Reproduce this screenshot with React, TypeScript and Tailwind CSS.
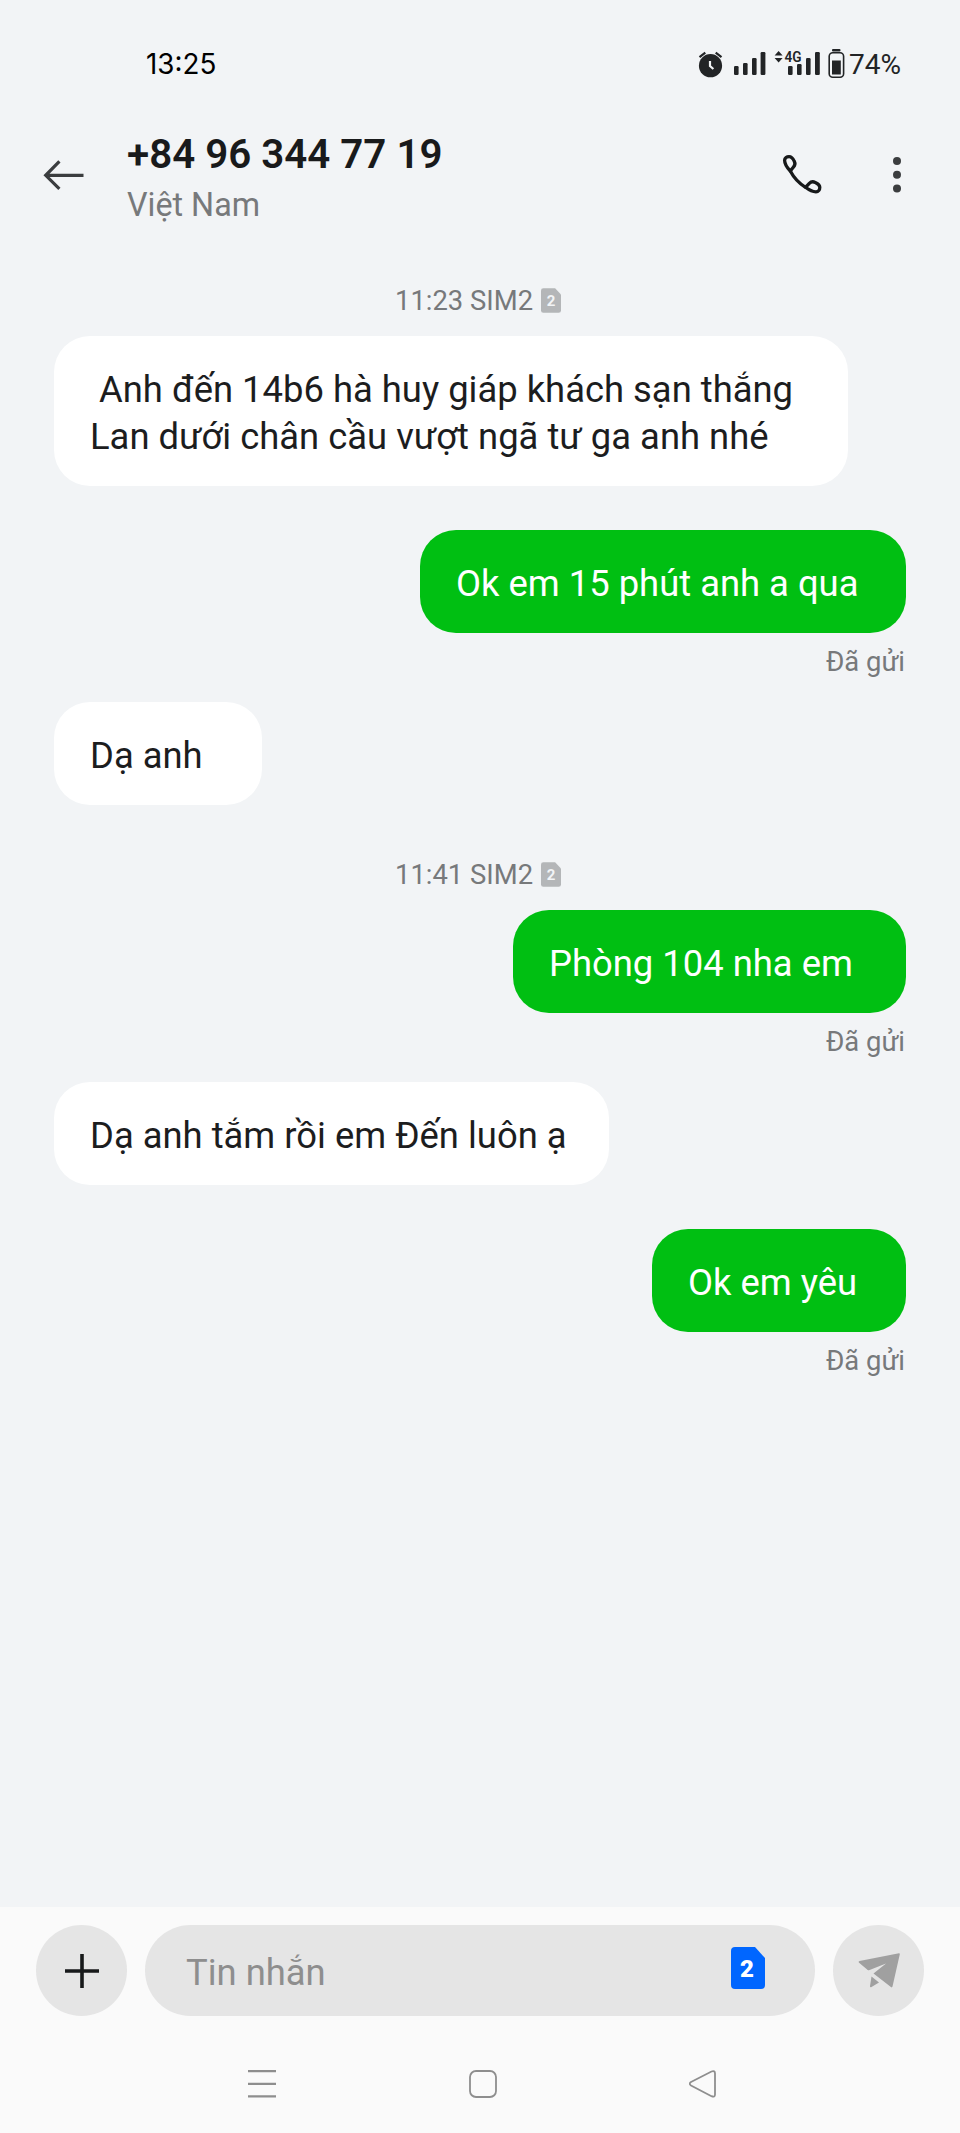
import { type ReactNode } from "react";

interface Message {
  text: string;
  sent?: boolean;
  className: string;
}

function SimBadge({ className, textClassName }: { className: string; textClassName: string }) {
  return (
    <span className={`relative flex items-center justify-center ${className}`}>
      <svg className="absolute inset-0 size-full" viewBox="0 0 34 42" fill="currentColor">
        <path d="M4 0h20l10 11v27a4 4 0 0 1-4 4H4a4 4 0 0 1-4-4V4a4 4 0 0 1 4-4z" />
      </svg>
      <span className={`relative ${textClassName}`}>2</span>
    </span>
  );
}

function StatusBar() {
  return (
    <div className="flex h-[114px] items-start justify-between pl-[146px] pr-[59px] pt-[47px]">
      <span className="text-[27.8px] leading-[35px] text-black font-[Inter,sans-serif]">13:25</span>
      <div className="flex text-[#222426]">
        <svg className="h-[36px] w-[149px]" viewBox="696 47 149 36" fill="currentColor">
          {/* Alarm */}
          <circle cx="710.5" cy="65.7" r="11.6" />
          <path d="M699.5 57.2l5.8-4.6M721.5 57.2l-5.8-4.6" stroke="currentColor" strokeWidth="2.2" />
          <path d="M710 61v5l3.4 3" fill="none" stroke="#f2f4f6" strokeWidth="2.2" />
          {/* First SIM */}
          <rect x="734" y="66" width="4.6" height="9" rx="1.2" />
          <rect x="743" y="63" width="4.6" height="12" rx="1.2" />
          <rect x="752" y="58" width="4.6" height="17" rx="1.2" />
          <rect x="760.6" y="52" width="4.8" height="23" rx="1.2" />
          {/* Second SIM with 4G */}
          <path d="M774.6 55.5l4-4.6 4 4.6zM774.6 58l4 4.6 4-4.6z" />
          <rect x="788" y="66" width="4.6" height="9" rx="1.2" />
          <rect x="797" y="64" width="4.6" height="11" rx="1.2" />
          <rect x="806" y="58" width="4.6" height="17" rx="1.2" />
          <rect x="815" y="52" width="4.8" height="23" rx="1.2" />
          <text x="784.5" y="62" fontSize="15.5" fontWeight="600" fontFamily="Roboto" textLength="17" lengthAdjust="spacingAndGlyphs">4G</text>
          {/* Battery */}
          <rect x="832" y="49" width="8.5" height="2.4" rx="1" />
          <rect x="829.2" y="52.8" width="14.4" height="24.4" rx="3.5" fill="none" stroke="currentColor" strokeWidth="1.6" />
          <rect x="832" y="60.5" width="8.8" height="14" />
        </svg>
        <span className="ml-[4px] text-[28px] leading-[36px]">74%</span>
      </div>
    </div>
  );
}

function Header() {
  return (
    <header className="flex h-[136px] items-start pl-[43px]">
      <svg className="mt-[46px] h-[30px] w-[41px] text-[#3b3d3f]" viewBox="0 0 41 30" fill="none" stroke="currentColor" strokeWidth="3.2">
        <path d="M40.5 15.3H3M16.4 1.4L2.7 15.3l13.7 13.5" />
      </svg>
      <div className="ml-[43px] mt-[17px] flex-1">
        <h1 className="whitespace-nowrap text-[40.3px] font-semibold leading-[48px] text-[#191a1b]">+84 96 344 77 19</h1>
        <p className="mt-[6px] text-[32.3px] leading-[40px] text-[#77797b]">Việt Nam</p>
      </div>
      <svg className="mt-[40px] size-[40px] text-[#17191a]" viewBox="782 154 40 40" fill="none" stroke="currentColor" strokeWidth="3.3" strokeLinejoin="round">
        <path d="M790.3 171C787 167.500 784.600 163 784.600 160.200c0-2.400 2.200-3.600 4.400-3.600 2.500 0 4 1.800 5.300 4.700 1.300 2.700.9 4-.8 5.700z" />
        <path d="M790.3 171c3.700 7 8.700 12.300 15.200 16.300" />
        <path d="M805.5 187.300c3.500 2.700 7.500 4.500 10.500 4.500 2.400 0 3.800-2 3.800-4.500 0-2.300-1.800-3.700-4.500-4.900-2.700-1.200-4.300-.8-6 .9z" />
      </svg>
      <svg className="ml-[71px] mr-[59px] mt-[43px] h-[36px] w-[8px] text-[#3b3d3f]" viewBox="0 0 8 36" fill="currentColor">
        <circle cx="4" cy="4" r="4" />
        <circle cx="4" cy="17.8" r="4" />
        <circle cx="4" cy="31.6" r="4" />
      </svg>
    </header>
  );
}

function Timestamp({ children, className }: { children: ReactNode; className: string }) {
  return (
    <div className={`flex h-[36px] items-center pl-[395px] text-[27.4px] leading-[36px] text-[#77797b] ${className}`}>
      <span className="whitespace-nowrap">{children}</span>
      <SimBadge className="mb-px ml-[8px] h-[25px] w-[20px] text-[#b4b6b8]" textClassName="mt-px text-[15px] font-bold leading-none text-[#f2f4f6]" />
    </div>
  );
}

function Bubble({ text, sent, className }: Message) {
  return (
    <div className={`flex flex-col ${sent ? "items-end" : "items-start"}`}>
      <div
        className={`whitespace-pre rounded-[36px] px-[36px] pb-[26px] pt-[30px] text-[36.4px] leading-[47px] ${
          sent ? "bg-[#00bf12] text-white" : "bg-white text-[#1c1d1e]"
        } ${className}`}
      >
        {text}
      </div>
      {sent && <span className="mr-px mt-[11px] h-[35px] text-[27.4px] leading-[36px] text-[#77797b]">Đã gửi</span>}
    </div>
  );
}

function Composer() {
  return (
    <footer className="flex h-[226px] flex-col bg-[#fafafa] pt-[18px]">
      <div className="flex h-[91px] gap-[18px] px-[36px]">
        <button className="flex size-[91px] items-center justify-center rounded-full bg-[#e5e5e5]">
          <svg className="size-[34px] text-[#17191a]" viewBox="0 0 34 34" stroke="currentColor" strokeWidth="3.6">
            <path d="M17 0v34M0 17h34" />
          </svg>
        </button>
        <div className="flex flex-1 items-center justify-between rounded-full bg-[#e5e5e5] pl-[41px] pr-[50px]">
          <span className="mt-[3px] text-[36.4px] leading-[47px] text-[#8e8e8e]">Tin nhắn</span>
          <SimBadge className="mb-[5px] h-[42px] w-[34px] text-[#0066ff]" textClassName="mr-[2px] mt-[2px] text-[24px] font-black leading-none text-white" />
        </div>
        <button className="flex size-[91px] items-center justify-center rounded-full bg-[#e5e5e5]">
          <svg className="h-[35px] w-[42px] text-[#a0a0a0]" viewBox="0 0 42 35" fill="currentColor">
            <path d="M1.5 8L41 .2q1 0 .8 1L34.5 33.600q-.4 1.400-1.600.4L15.500 20.500 28 10.500 11 17.300q-.7.200-1.300-.2L.8 9.500Q0 8.500 1.500 8z" />
            <path d="M13.5 23.500l7.500 6-7.500 4.500q-1.700.7-1.500-1z" />
          </svg>
        </button>
      </div>
      <nav className="flex items-start pl-[248px] pt-[54px] text-[#8e8e8e]">
        <svg className="size-[28px]" viewBox="0 0 28 28" stroke="currentColor" strokeWidth="2.2">
          <path d="M0 1.200h28M0 13.800h28M0 26.400h28" />
        </svg>
        <svg className="ml-[193px] size-[28px]" viewBox="0 0 28 28" fill="none" stroke="currentColor" strokeWidth="1.8">
          <rect x="1" y="1" width="26" height="26" rx="6" />
        </svg>
        <svg className="ml-[192px] size-[28px]" viewBox="0 0 28 28" fill="none" stroke="currentColor" strokeWidth="1.8">
          <path d="M2 12L22.500 1.500q3.500-1.200 3.500 2v21q0 3.200-3.500 1.700L2 15.500q-2.500-1.700 0-3.500z" />
        </svg>
      </nav>
    </footer>
  );
}

export default function App() {
  return (
    <div className="flex h-[2133px] w-[960px] flex-col bg-[#f2f4f6] font-[Roboto,sans-serif]">
      <StatusBar />
      <Header />
      <main className="flex-1 px-[54px]">
        <Timestamp className="-ml-[54px] mt-[33px]">11:23 SIM2</Timestamp>
        <Bubble className="mt-[17px] w-[794px]" text={" Anh đến 14b6 hà huy giáp khách sạn thắng\nLan dưới chân cầu vượt ngã tư ga anh nhé"} />
        <Bubble sent className="mt-[44px] w-[486px]" text="Ok em 15 phút anh a qua" />
        <Bubble className="mt-[23px] w-[208px]" text="Dạ anh" />
        <Timestamp className="-ml-[54px] mt-[52px]">11:41 SIM2</Timestamp>
        <Bubble sent className="mt-[17px] w-[393px]" text="Phòng 104 nha em" />
        <Bubble className="mt-[23px] w-[555px]" text="Dạ anh tắm rồi em Đến luôn ạ" />
        <Bubble sent className="mt-[44px] w-[254px]" text="Ok em yêu" />
      </main>
      <Composer />
    </div>
  );
}
